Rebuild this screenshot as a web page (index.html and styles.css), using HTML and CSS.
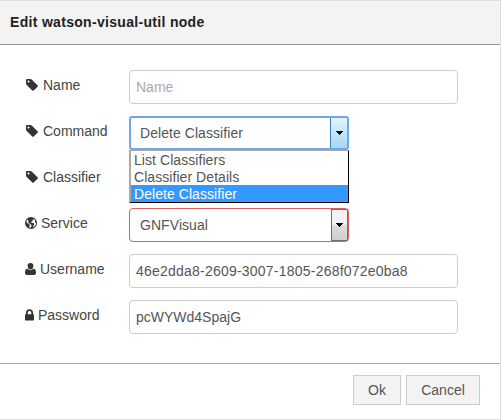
FILE: index.html
```html
<!DOCTYPE html>
<html lang="en">
<head>
<meta charset="utf-8">
<title>Edit watson-visual-util node</title>
<link rel="stylesheet" href="styles.css">
</head>
<body>
<svg class="defs" width="0" height="0">
  <symbol id="tag" viewBox="0 0 1536 1536"><path d="M448 320q0-53-37.500-90.500t-90.500-37.500-90.500 37.500-37.500 90.500 37.500 90.500 90.500 37.500 90.500-37.500 37.500-90.500zm1067 576q0 53-37 90l-491 492q-39 37-91 37-53 0-90-37l-715-716q-38-37-64.500-101t-26.500-117v-416q0-52 38-90t90-38h416q53 0 117 26.500t102 64.500l715 714q37 39 37 91z"/></symbol>
  <symbol id="globe" viewBox="0 0 12 12"><path fill-rule="evenodd" d="M6 0a6 6 0 1 1 0 12A6 6 0 0 1 6 0zM7 1.100 8.300 1.600 8.700 2.700 7.600 3.200 6.900 4.300 6 4.900 6.800 5.900 8.300 5.800 9.200 6.800 8.800 8.200 7.800 10.400A4.900 4.900 0 0 0 10.900 6L10 5 9.800 3.900 10.200 3.300A5 5 0 0 0 7 1.100zM1.800 3.300 1.300 4.700 2.200 6.100 3.700 6.800 4.900 7.900 4.300 9.200 4.500 10.700 5.300 10.900 6.400 9.500 6.500 8.200 5.300 7.100 4 6.200 3.300 5.300 3.600 4.200 2.600 2.600z"/></symbol>
  <symbol id="user" viewBox="0 0 11 12"><path d="M5.500 0a2.900 2.900 0 0 1 2.900 3C8.400 5 7.100 6.400 5.500 6.400S2.600 5 2.600 3A2.900 2.900 0 0 1 5.500 0zM2.700 5.700c1.600 1.900 4 1.900 5.600 0C10.400 5.700 11 7.800 11 10c0 1.200-.8 2-2 2H2c-1.200 0-2-.8-2-2 0-2.200.6-4.300 2.700-4.300z"/></symbol>
  <symbol id="lock" viewBox="0 0 9 12"><path fill-rule="evenodd" d="M.7 5.200H1V3.700a3.500 3.500 0 0 1 7 0v1.500h.3q.7 0 .7.700v4.900q0 .7-.7.700H.7q-.7 0-.7-.7V5.900q0-.7.7-.7zM2.700 5.200h3.600V3.700a1.800 1.800 0 0 0-3.600 0z"/></symbol>
  <symbol id="arrow" viewBox="0 0 7 4"><path d="M0 0h7v1H6v1H5v1H4v1H3V3H2V2H1V1H0z" shape-rendering="crispEdges"/></symbol>
</svg>
<main class="dialog">
  <header class="title">Edit watson-visual-util node</header>
  <form class="form">
    <div class="row">
      <label><svg class="icon tag"><use href="#tag"/></svg>Name</label>
      <div class="field placeholder">Name</div>
    </div>
    <div class="row">
      <label><svg class="icon tag"><use href="#tag"/></svg>Command</label>
      <div class="select focused">
        <span>Delete Classifier</span>
        <i class="drop"><svg><use href="#arrow"/></svg></i>
        <ul class="menu">
          <li>List Classifiers</li>
          <li>Classifier Details</li>
          <li class="selected">Delete Classifier</li>
        </ul>
      </div>
    </div>
    <div class="row">
      <label><svg class="icon tag"><use href="#tag"/></svg>Classifier</label>
    </div>
    <div class="row">
      <label><svg class="icon globe"><use href="#globe"/></svg>Service</label>
      <div class="select invalid">
        <span>GNFVisual</span>
        <i class="drop"><svg><use href="#arrow"/></svg></i>
      </div>
    </div>
    <div class="row">
      <label><svg class="icon user"><use href="#user"/></svg>Username</label>
      <div class="field digits">46e2dda8-2609-3007-1805-268f072e0ba8</div>
    </div>
    <div class="row">
      <label><svg class="icon lock"><use href="#lock"/></svg>Password</label>
      <div class="field">pcWYWd4SpajG</div>
    </div>
  </form>
  <footer class="actions">
    <button type="button" class="ok">Ok</button>
    <button type="button" class="cancel">Cancel</button>
  </footer>
</main>
</body>
</html>
```

FILE: styles.css
```css
* { box-sizing: border-box; }
body {
  margin: 0;
  font: 14px/20px "Liberation Sans", Arial, sans-serif;
  color: #444;
  background: #fff;
}
.defs { position: absolute; }
.dialog {
  width: 501px;
  height: 420px;
  border: solid #ddd;
  border-width: 1px 1px 1px 0;
  display: flex;
  flex-direction: column;
}
.title {
  height: 44px;
  padding: 11px 10px 0;
  background: #f3f3f3;
  border-bottom: 1px solid #999;
  color: #222;
  font-weight: bold;
  letter-spacing: 0.31px;
}
.form {
  height: 318px;
  padding: 25px 0 0 25px;
  display: flex;
  flex-direction: column;
  gap: 12px;
}
.row { display: flex; height: 34px; }
label {
  width: 104px;
  height: 30px;
  display: flex;
  align-items: center;
}
.icon { fill: #333; flex: none; }
.tag { width: 12px; height: 12px; margin: 0 5px 0 1px; }
.globe { width: 12px; height: 12px; margin-right: 4px; }
.user { width: 11px; height: 12px; margin-right: 4px; }
.lock { width: 9px; height: 12px; margin-right: 4px; }
.field {
  width: 329px;
  height: 34px;
  padding: 6px;
  border: 1px solid #ccc;
  border-radius: 4px;
  color: #555;
}
.digits { letter-spacing: 0.22px; }
.placeholder { color: #aaa; }
.select {
  position: relative;
  width: 220px;
  height: 34px;
  display: flex;
  border: 1px solid #d6615f;
  border-radius: 4px;
  color: #555;
  letter-spacing: 0.06px;
}
.select span { flex: 1; padding: 6px 0 0 10px; }
.focused { border: 2px solid #73a5e8; border-radius: 3px; }
.focused span { padding: 5px 0 0 9px; }
.drop {
  width: 17px;
  display: flex;
  align-items: center;
  justify-content: center;
  border: 1px solid #707070;
  background: linear-gradient(#f2f2f2 0 48%, #ddd 50%, #cfcfcf);
}
.drop svg { width: 7px; height: 4px; fill: #000; }
.focused .drop {
  border-color: #3c7fb1;
  border-width: 0 0 0 1px;
  background: linear-gradient(#e5f4fc, #c4e5f6 50%, #a4d8f5);
}
.menu {
  position: absolute;
  z-index: 1;
  left: -2px;
  top: 32px;
  width: 220px;
  margin: 0;
  padding: 0;
  list-style: none;
  background: #fff;
  border: 1px solid #000;
  border-top-color: #aaa;
  border-left: 2px solid #aaa;
  line-height: 19px;
}
.menu li { height: 17px; padding-left: 3px; }
.menu .selected { background: #39f; color: #fff; }
.actions {
  flex: 1;
  border-top: 1px solid #aaa;
  padding: 11px 20px 0;
  display: flex;
  justify-content: flex-end;
  gap: 5px;
}
button {
  height: 30px;
  padding: 0;
  font: inherit;
  color: #555;
  background: #f3f3f3;
  border: 1px solid #ccc;
}
.ok { width: 48px; }
.cancel { width: 74px; }
```
